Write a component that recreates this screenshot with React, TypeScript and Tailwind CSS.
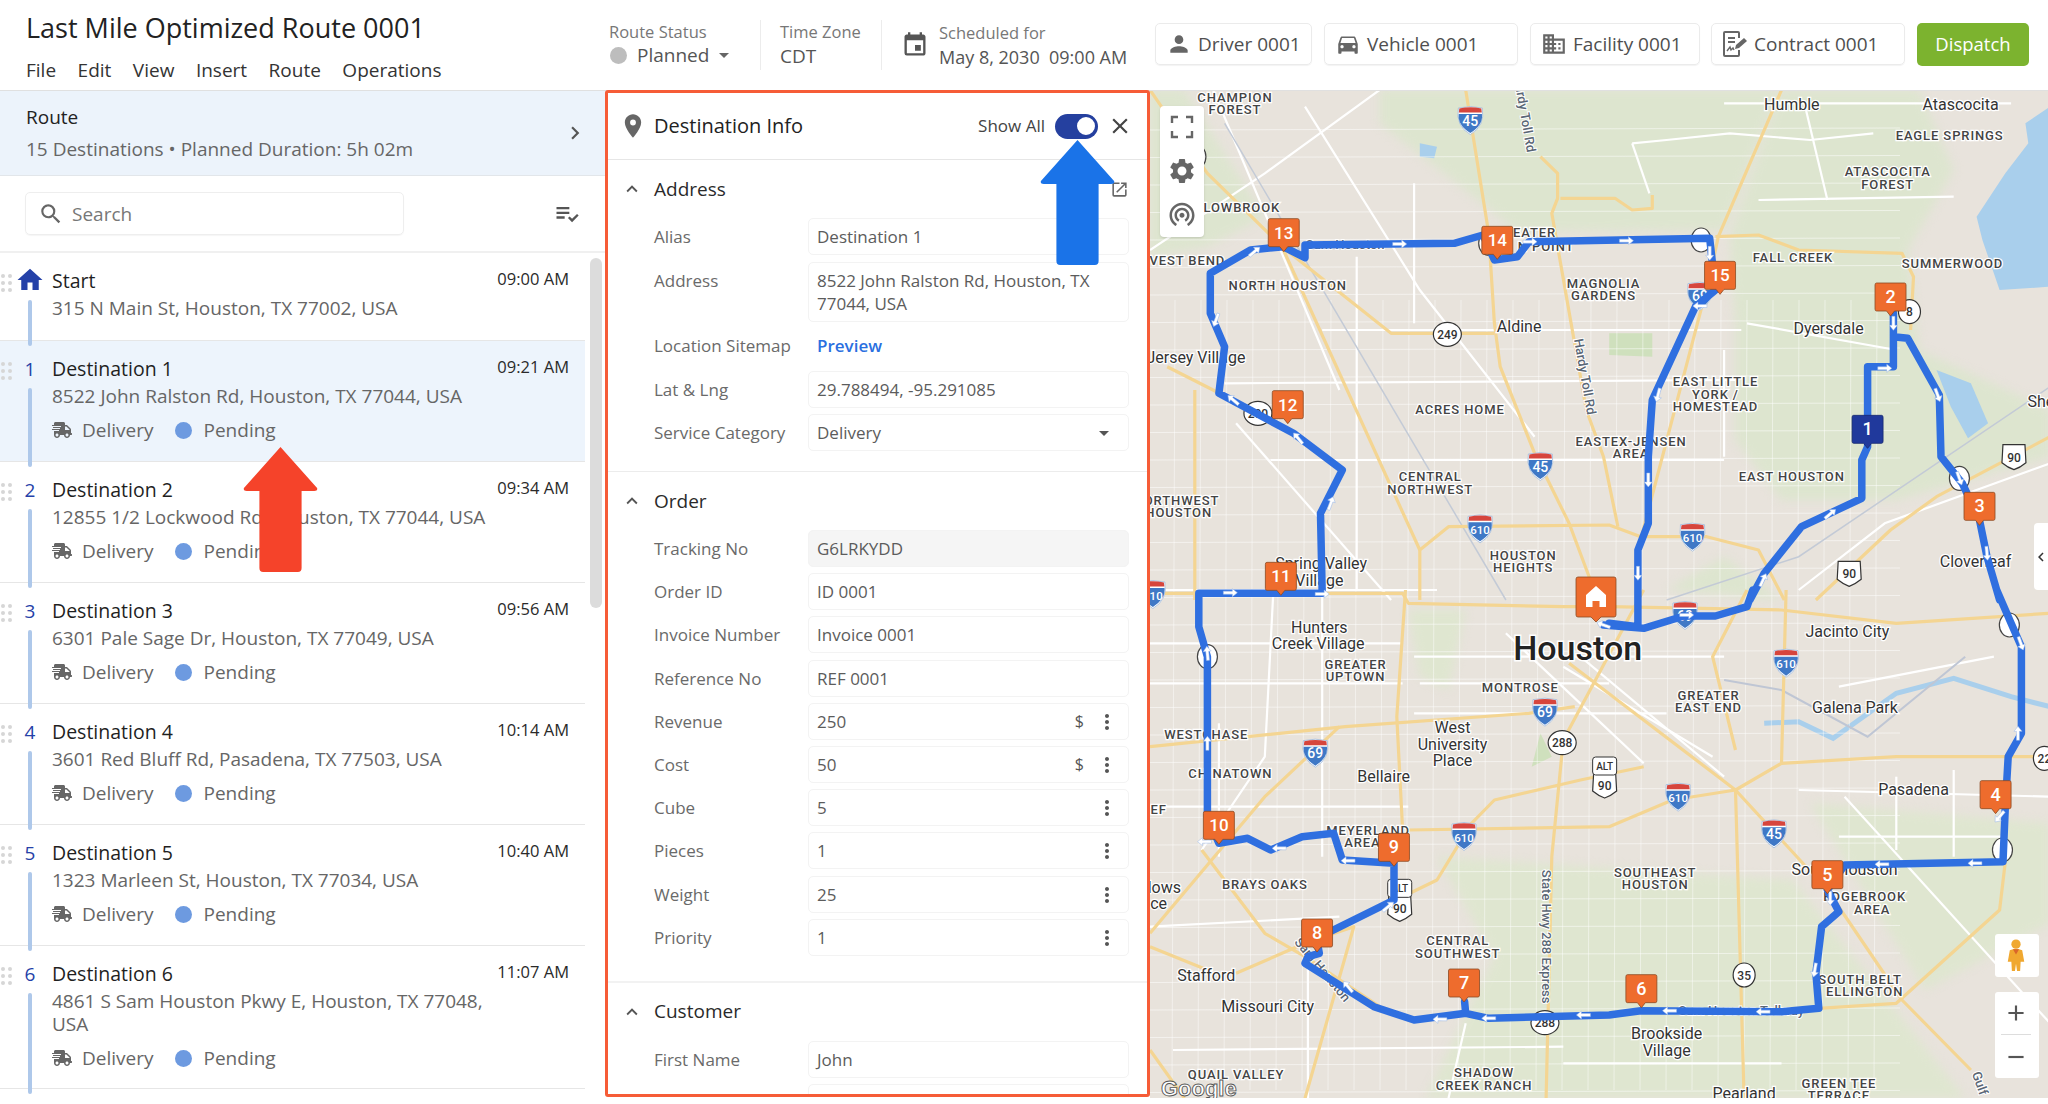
import React from "react";
import { FaShippingFast } from "react-icons/fa";
import {
  MdHome, MdPlace, MdPerson, MdDirectionsCar, MdOutlineDomain, MdEvent, MdSettings, MdWifiTethering,
  MdPlaylistAddCheck, MdMoreVert, MdOpenInNew, MdClose, MdSearch, MdExpandLess, MdChevronRight, MdChevronLeft, MdArrowDropDown, MdAdd, MdRemove,
} from "react-icons/md";

type P = [number, number];
const A = (x: number, y: number): P => [1150 + x / 1.742, 90 + y / 3];
const B = (x: number, y: number): P => [1150 + x / 1.742, 590 + y / 3];
const pa = (l: number[]) => { const o: string[] = []; for (let i = 0; i < l.length; i += 2) { const p = A(l[i], l[i + 1]); o.push(p[0].toFixed(1) + "," + p[1].toFixed(1)); } return o.join(" "); };
const pb = (l: number[]) => { const o: string[] = []; for (let i = 0; i < l.length; i += 2) { const p = B(l[i], l[i + 1]); o.push(p[0].toFixed(1) + "," + p[1].toFixed(1)); } return o.join(" "); };

const greensA = [
  [400, 0, 1095, 0, 1000, 420, 640, 425, 520, 260, 400, 100],
  [1010, 440, 1100, 0, 1340, 0, 1400, 240, 1320, 480, 1340, 780, 1568, 960, 1568, 1100, 1300, 1230, 1100, 1230, 1020, 1050, 1020, 700],
  [0, 0, 60, 0, 200, 380, 100, 470, 0, 500],
  [900, 1500, 1000, 1400, 1100, 1530],
];
const greensB = [
  [500, 800, 1120, 870, 1420, 1525, 480, 1525, 600, 1100],
  [1150, 640, 1568, 700, 1568, 1000, 1350, 1200],
  [450, 60, 550, 60, 520, 300, 470, 260],
];
const highwaysA = [
  [550, 0, 590, 430, 600, 700, 610, 830, 670, 1090, 730, 1300, 780, 1530],
  [680, 200, 710, 250, 710, 325, 700, 370, 760, 960, 790, 1100, 815, 1310],
  [715, 325, 810, 325, 840, 360, 875, 355, 875, 315],
  [1100, 0, 990, 440, 975, 560, 850, 1380],
  [985, 440, 1060, 435, 1130, 480, 1310, 490, 1330, 560, 1325, 720],
  [470, 1530, 470, 1380, 520, 1310, 800, 1305, 855, 1340, 970, 1340, 1060, 1380, 1105, 1530],
  [0, 0, 100, 250, 230, 470, 420, 730, 600, 730],
  [230, 470, 470, 1380],
  [30, 830, 110, 900, 260, 1040],
  [78, 900, 78, 1530],
  [1568, 1040, 1370, 1220, 1290, 1320, 1160, 1530],
];
const highwaysB = [
  [0, 10, 440, 10, 450, 40, 720, 50, 800, 50, 1100, 60, 1300, 100, 1568, 70],
  [0, 470, 340, 410, 660, 370, 740, 350],
  [445, 0, 430, 380, 440, 720],
  [450, 720, 800, 710, 910, 630, 1020, 600, 1100, 520, 1108, 0],
  [1100, 520, 1300, 500, 1568, 500],
  [730, 220, 1020, 600, 1100, 750, 1180, 900, 1310, 1230, 1430, 1440],
  [860, 0, 720, 450, 700, 800, 690, 1525],
  [1020, 600, 1035, 1525],
  [1020, 480, 980, 200, 1040, 0],
  [860, 530, 750, 570, 600, 630, 560, 700, 500, 870, 440, 920],
  [330, 410, 200, 620, 0, 1030],
  [90, 780, 200, 1030, 270, 1100, 400, 1250],
  [0, 1070, 100, 1140],
  [150, 1150, 270, 1060, 355, 1010, 270, 1525],
  [1165, 1255, 1300, 1240, 1480, 960, 1490, 815],
  [0, 1380, 60, 1525],
];
const whitesA = [
  [400, 0, 200, 250, 0, 480], [110, 0, 330, 900], [270, 50, 470, 600, 670, 1040], [840, 160, 900, 150, 1010, 130, 1150, 150, 1260, 130],
  [840, 160, 870, 310], [1000, 40, 1500, 40], [1140, 40, 1180, 330], [1060, 330, 1400, 320], [1040, 700, 1300, 780], [1000, 780, 1000, 1100],
  [1568, 1120, 1280, 1300, 1130, 1500], [300, 720, 1030, 720], [130, 880, 1020, 870], [210, 1110, 1000, 1110], [360, 500, 360, 1500], [460, 280, 460, 700],
  [0, 1500, 500, 1500], [150, 1000, 420, 1530],
];
const whitesB = [
  [215, 0, 200, 500, 90, 780], [620, 130, 860, 520], [460, 200, 1000, 200], [470, 280, 800, 280], [460, 370, 900, 370], [750, 200, 1000, 560],
  [720, 230, 980, 500], [0, 160, 440, 160], [0, 280, 440, 280], [0, 650, 450, 650], [0, 1010, 330, 980], [40, 1380, 720, 1370], [720, 1420, 1100, 1420],
  [1130, 600, 1568, 620], [1210, 620, 1568, 1300], [1200, 740, 1490, 740], [300, 0, 300, 800], [120, 400, 120, 800], [275, 1100, 275, 1525],
  [1300, 560, 1300, 780], [1400, 540, 1400, 800], [1200, 290, 1470, 200], [550, 1300, 520, 1525],
];

const routeA: number[] = [105, 550, 175, 480, 232, 470, 270, 503, 270, 465, 530, 460, 580, 435, 600, 510, 640, 500, 660, 455, 975, 445, 985, 600, 950, 650, 875, 930, 868, 1100, 868, 1300, 850, 1380, 850, 1530];
const route: string = [
  pb([790, 105, 860, 115, 930, 78, 985, 78, 1040, 50, 1050, 0]), pa([1045, 1530, 1070, 1450, 1135, 1310, 1240, 1225, 1240, 1110, 1250, 1070, 1250, 830, 1295, 830, 1295, 670, 1295, 740, 1320, 745, 1375, 915, 1378, 1100, 1415, 1180, 1445, 1290, 1458, 1400, 1480, 1530]),
  pb([1475, 0, 1500, 100, 1518, 170, 1518, 430, 1495, 500, 1490, 650, 1486, 815, 1210, 825, 1180, 900, 1200, 965, 1170, 1010, 1160, 1150, 1165, 1255, 1100, 1265, 855, 1262, 800, 1275, 590, 1285, 550, 1270, 548, 1235, 550, 1270, 460, 1290, 390, 1250, 270, 1120, 275, 1100, 295, 1090, 290, 1045, 425, 930, 425, 820, 335, 810, 320, 730, 265, 740, 210, 780, 170, 745, 120, 760, 100, 680, 100, 200, 85, 110, 85, 10]),
  pa([85, 1510, 300, 1510, 297, 1270, 335, 1140, 250, 1030, 120, 910, 130, 770, 105, 670]), pa(routeA), pb([850, 110, 800, 100]),
].join(" ");

const arrows: [P, number][] = [
  [A(435, 462), 0], [A(830, 452), 0], [A(662, 455), 0], [A(182, 485), -40], [A(115, 690), 110], [A(145, 930), 220], [A(258, 1045), 230], [A(315, 1240), -70], [A(140, 1508), 0], [A(300, 1512), 0],
  [A(975, 490), 90], [A(958, 648), 180], [A(885, 915), 105], [A(868, 1170), 90], [A(850, 1450), 90], [A(1185, 1272), -40], [A(1068, 1470), -65], [A(1280, 835), 0], [A(1295, 700), 90], [A(1372, 915), 70], [A(1410, 1165), 70], [A(1458, 1390), 85],
  [B(935, 75), 0], [B(1517, 160), 70], [B(1512, 430), -90], [B(1480, 680), 130], [B(1437, 820), 180], [B(1275, 823), 180], [B(1185, 925), 90], [B(1158, 1140), 100], [B(1068, 1265), 180], [B(905, 1262), 180], [B(755, 1275), 180], [B(590, 1285), 180], [B(505, 1288), 180], [B(345, 1190), 230], [B(225, 775), 180], [B(345, 812), 180], [B(95, 755), 180], [B(100, 460), -90], [B(100, 190), -95], [B(415, 950), -40], [B(790, 105), 200],
];

type L = [string, number, number];
const capsA: L[] = [["CHAMPION", 148, 22], ["FOREST", 148, 58], ["LOWBROOK", 160, 352], ["VEST BEND", 65, 512], ["NORTH HOUSTON", 240, 585], ["MAGNOLIA", 790, 580], ["GARDENS", 790, 617], ["FALL CREEK", 1120, 503], ["SUMMERWOOD", 1398, 520], ["EAGLE SPRINGS", 1393, 137], ["ATASCOCITA", 1285, 245], ["FOREST", 1285, 282], ["EAST LITTLE", 985, 875], ["YORK /", 985, 912], ["HOMESTEAD", 985, 948], ["ACRES HOME", 540, 958], ["EASTEX-JENSEN", 838, 1053], ["AREA", 838, 1090], ["EAST HOUSTON", 1118, 1158], ["CENTRAL", 488, 1160], ["NORTHWEST", 488, 1197], ["ORTHWEST", 55, 1230], ["HOUSTON", 50, 1268], ["HOUSTON", 650, 1395], ["HEIGHTS", 650, 1432], ["EATER", 670, 428], ["N POINT", 690, 468]];
const townsA: L[] = [["Humble", 1118, 42], ["Atascocita", 1412, 42], ["Aldine", 643, 710], ["Dyersdale", 1182, 716], ["Jersey Village", 80, 803], ["Spring Valley", 298, 1420], ["Village", 295, 1470], ["Cloverleaf", 1438, 1415], ["She", 1552, 935]];
const capsB: L[] = [["GREATER", 358, 222], ["UPTOWN", 358, 260], ["MONTROSE", 645, 292], ["GREATER", 973, 317], ["EAST END", 973, 353], ["WESTCHASE", 98, 433], ["CHINATOWN", 140, 550], ["MEYERLAND", 380, 720], ["AREA", 370, 758], ["BRAYS OAKS", 200, 884], ["SOUTHEAST", 880, 846], ["HOUSTON", 880, 882], ["CENTRAL", 536, 1052], ["SOUTHWEST", 536, 1089], ["EDGEBROOK", 1245, 920], ["AREA", 1258, 958], ["SOUTH BELT", 1237, 1168], ["ELLINGTON", 1245, 1205], ["QUAIL VALLEY", 150, 1453], ["SHADOW", 582, 1447], ["CREEK RANCH", 582, 1485], ["GREEN TEE", 1200, 1480], ["TERRACE", 1200, 1515], ["EF", 15, 658]];
const townsB: L[] = [["Hunters", 295, 113], ["Creek Village", 293, 160], ["West", 527, 413], ["University", 527, 462], ["Place", 527, 512], ["Bellaire", 407, 559], ["Jacinto City", 1215, 123], ["Galena Park", 1228, 353], ["Pasadena", 1330, 597], ["South Houston", 1210, 838], ["Brookside", 900, 1330], ["Village", 900, 1380], ["Stafford", 98, 1155], ["Missouri City", 205, 1249], ["Pearland", 1035, 1510], ["lows", 25, 893], ["ce", 15, 940]];
const interstates: [P, string][] = [[A(558, 90), "45"], [A(680, 1128), "45"], [A(575, 1315), "610"], [A(945, 1340), "610"], [A(958, 617), "69"], [A(5, 1512), "610"], [B(1108, 218), "610"], [B(547, 738), "610"], [B(920, 620), "610"], [B(688, 365), "69"], [B(288, 488), "69"], [B(1087, 730), "45"], [B(932, 75), "69"]];
const stateShields: [P, string][] = [[A(518, 733), "249"], [A(1323, 665), "8"], [B(718, 458), "288"], [B(1035, 1155), "35"], [B(688, 1298), "288"], [B(1558, 505), "22"], [A(188, 970), "290"]];
const usShields: [P, string][] = [[A(1505, 1100), "90"], [A(1218, 1450), "90"], [B(792, 585), "90"], [B(435, 955), "90"]];
const altShields: P[] = [B(792, 528), B(435, 895)];
const rings: P[] = [A(960, 450), A(1410, 1165), A(80, 200), B(100, 200), B(1485, 780), B(1497, 105), A(590, 460)];
const markers: [P, string, boolean][] = [
  [A(233, 482), "13", false], [A(605, 505), "14", false], [A(993, 610), "15", false], [A(1290, 675), "2", false], [A(1250, 1072), "1", true], [A(1445, 1303), "3", false], [A(240, 998), "12", false], [A(228, 1513), "11", false],
  [B(1473, 668), "4", false], [B(1180, 908), "5", false], [B(856, 1250), "6", false], [B(547, 1233), "7", false], [B(291, 1083), "8", false], [B(425, 826), "9", false], [B(120, 760), "10", false],
];

function RouteMap() {
  const f = "Roboto, sans-serif";
  return (
    <svg viewBox="1150 91 898 1007" className="block w-full h-full">
      <rect x="1150" y="91" width="898" height="1007" fill="#e8e3dc" />
      <g className="blur-[5px]">
        {greensA.map((g, i) => <polygon key={i} points={pa(g)} fill="#dde5cf" />)}
        {greensB.map((g, i) => <polygon key={i} points={pb(g)} fill="#dfe6d0" />)}
      </g>
      <polygon points={pa([1568, 50, 1525, 100, 1530, 160, 1490, 250, 1440, 380, 1450, 450, 1480, 600, 1568, 590])} fill="#a9cfec" />
      <polygon points={pa([1370, 840, 1430, 880, 1460, 1000, 1425, 1045, 1395, 950])} fill="#a9cfec" />
      <polygon points={pa([470, 160, 500, 170, 495, 205, 470, 200])} fill="#a9cfec" />
      <polygon points={pa([800, 730, 875, 730, 875, 800, 800, 795])} fill="#cfe0bd" />
      <polygon points={pb([680, 430, 700, 500, 665, 530])} fill="#cfe0bd" />
      <polyline points={pb([1070, 400, 1130, 395, 1190, 445, 1300, 310, 1400, 265, 1500, 320, 1568, 350])} fill="none" stroke="#a9cfec" strokeWidth="5" />
      {Array.from({ length: 36 }, (_, i) => <line key={"h" + i} x1={1150} x2={1900} y1={130 + i * 27.5} y2={128 + i * 27.5} stroke="#ffffff" strokeWidth="1" opacity="0.5" />)}
      {Array.from({ length: 28 }, (_, i) => <line key={"v" + i} x1={1175 + i * 26} x2={1172 + i * 26} y1={300} y2={1090} stroke="#ffffff" strokeWidth="1" opacity="0.45" />)}
      {whitesA.map((g, i) => <polyline key={i} points={pa(g)} fill="none" stroke="#ffffff" strokeWidth="2.2" />)}
      {whitesB.map((g, i) => <polyline key={i} points={pb(g)} fill="none" stroke="#ffffff" strokeWidth="2.2" />)}
      <polyline points={pb([1000, 270, 1100, 300, 1250, 440, 1420, 200])} fill="none" stroke="#bfc6d4" strokeWidth="2" />
      <polyline points={pa([1568, 890, 1130, 1400, 900, 1530])} fill="none" stroke="#c3cad6" strokeWidth="1.5" />
      <polyline points={pa([130, 100, 620, 1530])} fill="none" stroke="#c3cad6" strokeWidth="1.5" />
      {highwaysA.map((g, i) => <polyline key={i} points={pa(g)} fill="none" stroke="#f4d592" strokeWidth="3.2" strokeLinejoin="round" />)}
      {highwaysB.map((g, i) => <polyline key={i} points={pb(g)} fill="none" stroke="#f4d592" strokeWidth="3.2" strokeLinejoin="round" />)}

      {interstates.map(([p, t], i) => (
        <g key={i} transform={`translate(${p[0]} ${p[1]})`}>
          <path d="M-12 -12 Q0 -15 12 -12 Q15 6 0 14.5 Q-15 6 -12 -12 Z" fill="#ffffff" stroke="#9db7da" strokeWidth="0.8" />
          <path d="M-11 -11.5 Q0 -14 11 -11.5 L11.5 -7.5 L-11.5 -7.5 Z" fill="#d6453d" />
          <path d="M-11.6 -6 L11.6 -6 Q13 5 0 13 Q-13 5 -11.6 -6 Z" fill="#3f78c6" />
          <text x="0" y="5.5" textAnchor="middle" fontFamily={f} fontWeight="500" fontSize={t.length > 2 ? 11.5 : 14} fill="#ffffff">{t}</text>
        </g>
      ))}
      {stateShields.map(([p, t], i) => (
        <g key={i} transform={`translate(${p[0]} ${p[1]})`}>
          <ellipse rx={t.length > 2 ? 14 : 11} ry="12" fill="#ffffff" stroke="#333333" strokeWidth="1.2" />
          <text x="0" y="4.5" textAnchor="middle" fontFamily={f} fontWeight="500" fontSize="12" fill="#333333">{t}</text>
        </g>
      ))}
      {usShields.map(([p, t], i) => (
        <g key={i} transform={`translate(${p[0]} ${p[1]})`}>
          <path d="M-11 -12 L11 -12 L12 6 Q6 11 0 13 Q-6 11 -12 6 Z" fill="#ffffff" stroke="#333333" strokeWidth="1.2" />
          <text x="0" y="5" textAnchor="middle" fontFamily={f} fontWeight="500" fontSize="12" fill="#333333">{t}</text>
        </g>
      ))}
      {altShields.map((p, i) => (
        <g key={i} transform={`translate(${p[0]} ${p[1]})`}>
          <rect x="-12" y="-9" width="24" height="18" rx="3" fill="#ffffff" stroke="#333333" strokeWidth="1" />
          <text x="0" y="4" textAnchor="middle" fontFamily={f} fontWeight="500" fontSize="10" fill="#333333">ALT</text>
        </g>
      ))}
      {rings.map((p, i) => <ellipse key={i} cx={p[0]} cy={p[1]} rx="10" ry="12" fill="#ffffff" stroke="#444444" strokeWidth="1.2" />)}

      {[...capsA.map(([t, x, y]) => [t, ...A(x, y)] as [string, number, number]), ...capsB.map(([t, x, y]) => [t, ...B(x, y)] as [string, number, number])].map(([t, x, y], i) => (
        <text key={i} x={x} y={y + 4.5} textAnchor="middle" fontFamily={f} fontWeight="500" fontSize="13" letterSpacing="0.9" fill="#444444" stroke="#ffffff" strokeWidth="2.5" paintOrder="stroke">{t}</text>
      ))}
      {[...townsA.map(([t, x, y]) => [t, ...A(x, y)] as [string, number, number]), ...townsB.map(([t, x, y]) => [t, ...B(x, y)] as [string, number, number])].map(([t, x, y], i) => (
        <text key={i} x={x} y={y + 5.5} textAnchor="middle" fontFamily={f} fontSize="16" fill="#333333" stroke="#ffffff" strokeWidth="2.5" paintOrder="stroke">{t}</text>
      ))}
      <text x={B(745, 175)[0]} y={B(745, 175)[1] + 12} textAnchor="middle" fontFamily={f} fontWeight="500" fontSize="34" fill="#222222" stroke="#ffffff" strokeWidth="3" paintOrder="stroke">Houston</text>
      {([
        ["Hardy Toll Rd", A(652, 72), 80], ["Hardy Toll Rd", A(757, 860), 80], ["State Hwy 288 Express", B(690, 1040), 90], ["Sam Houston", B(300, 1140), 50], ["Sam Houston Tollway", B(1030, 1262), 0], ["Gulf", B(1445, 1480), 70], ["Sam Houston", A(340, 465), 0],
      ] as [string, P, number][]).map(([t, p, r], i) => (
        <text key={i} transform={`translate(${p[0]} ${p[1]}) rotate(${r})`} y="4" textAnchor="middle" fontFamily={f} fontWeight="500" fontSize="13" fill="#5a6675" stroke="#ffffff" strokeWidth="2" paintOrder="stroke">{t}</text>
      ))}

      <polyline points={route} fill="none" stroke="#2f6fe0" strokeWidth="7.5" strokeLinejoin="round" strokeLinecap="round" />
      {arrows.map(([p, r], i) => (
        <g key={i} transform={`translate(${p[0]} ${p[1]}) rotate(${r})`}>
          <path d="M-7 -1.5 L2 -1.5 L2 -4 L7 0 L2 4 L2 1.5 L-7 1.5 Z" fill="#ffffff" stroke="#9ab8e8" strokeWidth="0.5" />
        </g>
      ))}

      {markers.map(([p, t, dark], i) => (
        <g key={i} transform={`translate(${p[0]} ${p[1]})`}>
          <path d="M-14 -32 Q-15.5 -32 -15.5 -30 L-15.5 -6 Q-15.5 -4 -14 -4 L-4 -4 L0 1 L4 -4 L14 -4 Q15.5 -4 15.5 -6 L15.5 -30 Q15.5 -32 14 -32 Z" fill={dark ? "#20399c" : "#ee6c2d"} stroke={dark ? "#16286f" : "#8c4a22"} strokeWidth="0.8" />
          <text x="0" y="-12" textAnchor="middle" fontFamily={f} fontWeight="500" fontSize={t.length > 1 ? 17 : 18} fill="#ffffff">{t}</text>
        </g>
      ))}
      <g transform="translate(1596 622)">
        <path d="M-18 -45 Q-20 -45 -20 -43 L-20 -7 Q-20 -5 -18 -5 L-5 -5 L0 0 L5 -5 L18 -5 Q20 -5 20 -7 L20 -43 Q20 -45 18 -45 Z" fill="#ee6c2d" stroke="#8c4a22" strokeWidth="0.8" />
        <path d="M0 -36 L-10 -27 L-10 -15 L-3.5 -15 L-3.5 -21 L3.5 -21 L3.5 -15 L10 -15 L10 -27 Z" fill="#ffffff" />
      </g>
      <text x={B(85, 1495)[0]} y={B(85, 1495)[1] + 8} textAnchor="middle" fontFamily="'Liberation Sans', sans-serif" fontWeight="700" fontSize="22" fill="#ffffff" stroke="#555555" strokeWidth="0.9">Google</text>
    </svg>
  );
}

const dest = [
  ["1", "Destination 1", "8522 John Ralston Rd, Houston, TX 77044, USA", "09:21 AM"],
  ["2", "Destination 2", "12855 1/2 Lockwood Rd, Houston, TX 77044, USA", "09:34 AM"],
  ["3", "Destination 3", "6301 Pale Sage Dr, Houston, TX 77049, USA", "09:56 AM"],
  ["4", "Destination 4", "3601 Red Bluff Rd, Pasadena, TX 77503, USA", "10:14 AM"],
  ["5", "Destination 5", "1323 Marleen St, Houston, TX 77034, USA", "10:40 AM"],
  ["6", "Destination 6", "4861 S Sam Houston Pkwy E, Houston, TX 77048, USA", "11:07 AM"],
];

function Drag() {
  return (
    <div className="absolute left-[1px] top-[21px] grid grid-cols-2 gap-x-[3px] gap-y-[3px]">
      {[0, 1, 2, 3, 4, 5].map((i) => <span key={i} className="block w-[4px] h-[4px] rounded-full bg-[#d6d6d6]" />)}
    </div>
  );
}

function StopRow({ d, active }: { d: string[]; active: boolean }) {
  return (
    <div className={`relative border-b border-[#e6e6e6] pt-4 pl-[52px] pr-[16px] ${active ? "bg-[#edf4fc]" : "bg-white"} ${d[0] === "6" ? "h-[143px]" : "h-[121px]"}`}>
      <Drag />
      <span className="absolute left-[22px] top-[16px] w-[16px] text-center text-[19px] leading-6 text-[#2541a8]">{d[0]}</span>
      <span className="absolute left-[28px] top-[47px] -bottom-[6px] w-[4px] rounded-full bg-[#aec8ea] z-10" />
      <div className="flex justify-between">
        <span className="text-[19.5px] leading-6 font-medium text-[#1f1f1f]">{d[1]}</span>
        <span className="text-[16.5px] leading-[20px] font-medium text-[#2a2a2a]">{d[3]}</span>
      </div>
      <div className="mt-[4px] text-[19px] leading-[23px] text-[#666666] w-[470px]">{d[2]}</div>
      <div className="mt-[10px] flex items-center text-[19px] leading-6 text-[#666666]">
        <FaShippingFast className="text-[#666666]" size={20} />
        <span className="ml-[10px]">Delivery</span>
        <span className="ml-[21px] w-[17px] h-[17px] rounded-full bg-[#6d9ae0]" />
        <span className="ml-[12px]">Pending</span>
      </div>
    </div>
  );
}

function LeftPanel() {
  return (
    <div className="w-[605px] shrink-0 flex flex-col h-full overflow-hidden">
      <div className="h-[85px] shrink-0 bg-[#ecf3fb] border-b border-[#e2e6ea] pl-[26px] pr-[17px] flex items-center justify-between">
        <div>
          <div className="text-[19px] leading-6 font-medium text-[#222222]">Route</div>
          <div className="mt-[8px] text-[19px] leading-6 text-[#666666]">15 Destinations • Planned Duration: 5h 02m</div>
        </div>
        <MdChevronRight size={26} className="text-[#555555]" />
      </div>
      <div className="h-[77px] shrink-0 border-b-2 border-[#f0f0f0] pl-[25px] pr-[24px] flex items-center justify-between">
        <div className="w-[379px] h-[43px] rounded-[5px] border border-[#eeeeee] flex items-center pl-[12px] shadow-[0_1px_1px_rgba(0,0,0,0.04)]">
          <MdSearch size={26} className="text-[#666666]" />
          <span className="ml-[8px] text-[19px] leading-[24px] pt-[1px] text-[#777777]">Search</span>
        </div>
        <MdPlaylistAddCheck size={28} className="text-[#555555]" />
      </div>
      <div className="flex flex-1 min-h-0">
        <div className="w-[585px] shrink-0">
          <div className="relative h-[88px] border-b border-[#e6e6e6] pt-4 pl-[52px] pr-[16px]">
            <Drag />
            <MdHome size={30} className="absolute left-[15px] top-[12px] text-[#2541a8]" />
            <span className="absolute left-[28px] top-[47px] -bottom-[6px] w-[4px] rounded-full bg-[#aec8ea] z-10" />
            <div className="flex justify-between">
              <span className="text-[19.5px] leading-6 font-medium text-[#1f1f1f]">Start</span>
              <span className="text-[16.5px] leading-[20px] font-medium text-[#2a2a2a]">09:00 AM</span>
            </div>
            <div className="mt-[4px] text-[19px] leading-[23px] text-[#666666]">315 N Main St, Houston, TX 77002, USA</div>
          </div>
          {dest.map((d, i) => <StopRow key={d[0]} d={d} active={i === 0} />)}
        </div>
        <div className="w-[20px] pl-[5px] pt-[5px]">
          <div className="w-[12px] h-[350px] rounded-full bg-[#dcdcdc]" />
        </div>
      </div>
    </div>
  );
}

function Field({ label, value, h = "h-[37px]", bg = "", right }: { label: string; value: React.ReactNode; h?: string; bg?: string; right?: React.ReactNode }) {
  return (
    <div className="flex">
      <div className="w-[154px] shrink-0 text-[17px] leading-[23px] pt-[7px] text-[#6a6a6a]">{label}</div>
      <div className={`flex-1 ${h} rounded-[5px] border border-[#f3f3f3] ${bg} pl-[8px] pr-[11px] flex items-start justify-between pt-[6px]`}>
        <div className="text-[17px] leading-[23.5px] text-[#5c5c5c]">{value}</div>
        {right}
      </div>
    </div>
  );
}

const Kebab = ({ money }: { money?: boolean }) => (
  <span className="flex items-center text-[#555555]">
    {money && <span className="text-[16px] leading-[23px] mr-[11px]">$</span>}
    <MdMoreVert size={24} className="mr-[-2px]" />
  </span>
);

function Section({ title, extra }: { title: string; extra?: React.ReactNode }) {
  return (
    <div className="h-[58px] flex items-center justify-between pl-[14px] pr-[18px]">
      <div className="flex items-center">
        <MdExpandLess size={22} className="text-[#555555] ml-[-1px]" />
        <span className="ml-[11px] text-[19px] text-[#2a2a2a]">{title}</span>
      </div>
      {extra}
    </div>
  );
}

function InfoPanel() {
  return (
    <div className="relative z-20 -mt-[1px] w-[545px] shrink-0 h-[1007px] border-[3px] border-[#f65c37] rounded-[3px] bg-white overflow-hidden">
      <div className="h-[67px] border-b border-[#e6e6e6] flex items-center justify-between pl-[11px] pr-[14px]">
        <div className="flex items-center">
          <MdPlace size={28} className="text-[#666666]" />
          <span className="ml-[7px] text-[20px] font-medium text-[#222222]">Destination Info</span>
        </div>
        <div className="flex items-center">
          <span className="text-[17px] text-[#444444]">Show All</span>
          <span className="ml-[10px] w-[43px] h-[25px] rounded-full bg-[#25409f] flex items-center justify-end pr-[1px]">
            <span className="w-[22px] h-[22px] rounded-full bg-white border-2 border-[#25409f]" />
          </span>
          <MdClose size={26} className="ml-[9px] text-[#444444]" />
        </div>
      </div>
      <Section title="Address" extra={<MdOpenInNew size={19} className="text-[#666666]" />} />
      <div className="pl-[46px] pr-[18px] flex flex-col gap-[6.5px] pb-[20px] border-b border-[#ececec]">
        <Field label="Alias" value="Destination 1" />
        <Field label="Address" h="h-[60px]" value={<>8522 John Ralston Rd, Houston, TX<br />77044, USA</>} />
        <div className="flex h-[36px] items-center">
          <div className="w-[154px] shrink-0 text-[17px] text-[#6a6a6a]">Location Sitemap</div>
          <div className="pl-[9px] text-[17px] font-semibold text-[#2a6fe0]">Preview</div>
        </div>
        <Field label="Lat & Lng" value="29.788494, -95.291085" />
        <Field label="Service Category" value="Delivery" right={<MdArrowDropDown size={24} className="text-[#555555] mr-[1px]" />} />
      </div>
      <Section title="Order" />
      <div className="pl-[46px] pr-[18px] flex flex-col gap-[6.2px] pb-[25px] border-b-2 border-[#f2f2f2]">
        <Field label="Tracking No" value="G6LRKYDD" bg="bg-[#f5f5f5]" />
        <Field label="Order ID" value="ID 0001" />
        <Field label="Invoice Number" value="Invoice 0001" />
        <Field label="Reference No" value="REF 0001" />
        <Field label="Revenue" value="250" right={<Kebab money />} />
        <Field label="Cost" value="50" right={<Kebab money />} />
        <Field label="Cube" value="5" right={<Kebab />} />
        <Field label="Pieces" value="1" right={<Kebab />} />
        <Field label="Weight" value="25" right={<Kebab />} />
        <Field label="Priority" value="1" right={<Kebab />} />
      </div>
      <Section title="Customer" />
      <div className="pl-[46px] pr-[18px] flex flex-col gap-[6.3px]">
        <Field label="First Name" value="John" />
        <Field label="" value="" />
      </div>
    </div>
  );
}

const ContractIcon = () => (
  <svg width="26" height="28" viewBox="0 0 26 28" fill="none" stroke="#666666" strokeWidth="2">
    <path d="M17 20 V25 Q17 26 16 26 H3 Q2 26 2 25 V3 Q2 2 3 2 H16 Q17 2 17 3 V8" />
    <path d="M6 8 H13 M6 12 H13" />
    <path d="M5 21 L8 17 L9 20 L11 18 L12 20" strokeWidth="1.4" />
    <path d="M13 19 L14 15 L22 8 L25 11 L17 18 Z" fill="#666666" stroke="none" />
  </svg>
);

function HeadBtn({ w, icon, text, ml }: { w: string; icon: React.ReactNode; text: string; ml: string }) {
  return (
    <div className={`${w} ${ml} h-[42px] shrink-0 rounded-[5px] border border-[#ebebeb] flex items-center pl-[9px] shadow-[0_1px_1px_rgba(0,0,0,0.05)]`}>
      <span className="w-[28px] flex justify-center">{icon}</span>
      <span className="ml-[5px] text-[19px] text-[#4f4f4f]">{text}</span>
    </div>
  );
}

function Header() {
  return (
    <div className="h-[91px] shrink-0 border-b border-[#e0e0e0] flex shadow-[0_1px_2px_rgba(0,0,0,0.05)]">
      <div className="w-[609px] shrink-0 pl-[26px] pt-[10px]">
        <div className="text-[27px] leading-[36px] text-[#222222]">Last Mile Optimized Route 0001</div>
        <div className="mt-[12px] flex gap-[21.5px] text-[19px] leading-[24px] text-[#333333]">
          <span>File</span><span>Edit</span><span>View</span><span>Insert</span><span>Route</span><span>Operations</span>
        </div>
      </div>
      <div className="w-[151px] shrink-0 pt-[21px]">
        <div className="text-[16.5px] leading-[22px] text-[#777777]">Route Status</div>
        <div className="flex items-center text-[19px] leading-[24px] text-[#555555]">
          <span className="ml-[1px] w-[17px] h-[17px] rounded-full bg-[#bdbdbd]" />
          <span className="ml-[10px]">Planned</span>
          <MdArrowDropDown size={24} className="ml-[3px] text-[#666666]" />
        </div>
      </div>
      <div className="my-[20px] w-px bg-[#ececec]" />
      <div className="w-[120px] shrink-0 pl-[19px] pt-[21px]">
        <div className="text-[16.5px] leading-[22px] text-[#777777]">Time Zone</div>
        <div className="mt-[1px] text-[19px] leading-[24px] text-[#555555]">CDT</div>
      </div>
      <div className="my-[20px] w-px bg-[#ececec]" />
      <div className="w-[273px] shrink-0 flex items-center pl-[19px]">
        <MdEvent size={28} className="text-[#555555]" />
        <div className="ml-[10px] pt-[1px]">
          <div className="text-[16.5px] leading-[22px] text-[#777777]">Scheduled for</div>
          <div className="mt-[1px] text-[18px] leading-[24px] text-[#555555] whitespace-nowrap">May 8, 2030&nbsp; 09:00 AM</div>
        </div>
      </div>
      <div className="flex items-center pb-[2px]">
        <HeadBtn ml="ml-0" w="w-[157px]" icon={<MdPerson size={26} className="text-[#666666]" />} text="Driver 0001" />
        <HeadBtn ml="ml-[12px]" w="w-[194px]" icon={<MdDirectionsCar size={26} className="text-[#666666]" />} text="Vehicle 0001" />
        <HeadBtn ml="ml-[12px]" w="w-[170px]" icon={<MdOutlineDomain size={26} className="text-[#666666]" />} text="Facility 0001" />
        <HeadBtn ml="ml-[11px]" w="w-[194px]" icon={<ContractIcon />} text="Contract 0001" />
        <div className="ml-[12px] w-[112px] h-[43px] shrink-0 rounded-[5px] bg-[#7cb32f] flex items-center justify-center text-[18.5px] text-white">Dispatch</div>
      </div>
    </div>
  );
}

function MapPanel() {
  return (
    <div className="relative flex-1 h-[1007px] overflow-hidden">
      <RouteMap />
      <div className="absolute left-[10px] top-[15px] w-[44px] h-[131px] rounded-[4px] bg-white flex flex-col items-center justify-around py-[2px] shadow-sm">
        <svg width="24" height="24" viewBox="0 0 24 24" fill="none" stroke="#666666" strokeWidth="2.4"><path d="M2 8V2H8M16 2H22V8M22 16V22H16M8 22H2V16" /></svg>
        <MdSettings size={30} className="text-[#666666] mt-[4px]" />
        <MdWifiTethering size={30} className="text-[#666666]" />
      </div>
      <div className="absolute right-0 top-[432px] w-[14px] h-[67px] rounded-l-[4px] bg-white flex items-center justify-center">
        <MdChevronLeft size={18} className="text-[#333333] shrink-0" />
      </div>
      <div className="absolute left-[845px] top-[843px] w-[44px] h-[43px] rounded-[3px] bg-white flex items-center justify-center pr-[3px]">
        <svg width="20" height="33" viewBox="0 0 18 32">
          <circle cx="9" cy="5" r="4.5" fill="#f0a830" />
          <path d="M3 11 Q9 8 15 11 L17 22 L13.5 22 L13 31 L10 31 L9 24 L8 31 L5 31 L4.5 22 L1 22 Z" fill="#f0a830" />
          <path d="M6 10 L9 15 L12 10 Z" fill="#d9662a" />
        </svg>
      </div>
      <div className="absolute left-[845px] top-[901px] w-[44px] h-[86px] rounded-[3px] bg-white flex flex-col items-center pr-[2px]">
        <div className="h-[42px] flex items-center"><MdAdd size={26} className="text-[#555555]" /></div>
        <div className="w-[30px] h-px bg-[#dddddd]" />
        <div className="h-[43px] flex items-center"><MdRemove size={26} className="text-[#555555]" /></div>
      </div>
    </div>
  );
}

function Arrow({ className, color }: { className: string; color: string }) {
  return (
    <svg className={`absolute z-30 ${className}`} viewBox="0 0 80 125" preserveAspectRatio="none">
      <path d="M40 0 L79 41 Q80 44 76 44 L62.5 44 L62.5 121 Q62.5 125 58.5 125 L21.5 125 Q17.5 125 17.5 121 L17.5 44 L4 44 Q0 44 1 41 Z" fill={color} />
    </svg>
  );
}

export default function App() {
  return (
    <div className="relative w-[2048px] h-[1104px] overflow-hidden bg-white [font-family:'Open_Sans',sans-serif]">
      <Header />
      <div className="flex h-[1013px] items-start">
        <LeftPanel />
        <InfoPanel />
        <MapPanel />
      </div>
      <Arrow className="left-[243px] top-[447px] w-[75px] h-[125px]" color="#f5432a" />
      <Arrow className="left-[1040px] top-[140px] w-[75px] h-[125px]" color="#1a73e8" />
    </div>
  );
}
